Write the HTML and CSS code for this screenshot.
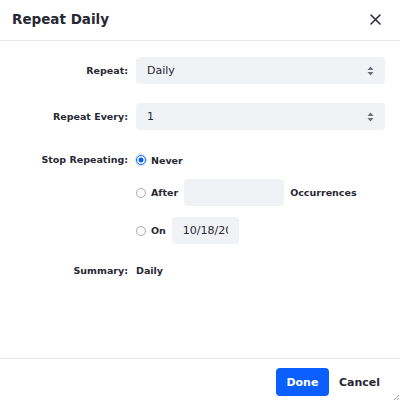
FILE: index.html
```html
<!DOCTYPE html>
<html lang="en">
<head>
<meta charset="utf-8">
<title>Repeat Daily</title>
<link rel="stylesheet" href="styles.css">
</head>
<body>
<div class="dialog">
  <header class="head">
    <h1 class="title">Repeat Daily</h1>
    <button class="close" aria-label="Close">
      <svg width="11" height="11" viewBox="0 0 11 11"><path d="M1 1 L10 10 M10 1 L1 10" stroke="#272833" stroke-width="1.5" stroke-linecap="round" fill="none"/></svg>
    </button>
  </header>
  <main class="body">
    <div class="row">
      <span class="lbl">Repeat:</span>
      <div class="select"><span>Daily</span>
        <svg class="arrows" width="7" height="10" viewBox="0 0 7 10"><path d="M3.5 0.5 L6.5 4 L0.5 4 Z M0.5 6 L6.5 6 L3.5 9.5 Z" fill="#6b6c7e"/></svg>
      </div>
    </div>
    <div class="row r2">
      <span class="lbl">Repeat Every:</span>
      <div class="select"><span>1</span>
        <svg class="arrows" width="7" height="10" viewBox="0 0 7 10"><path d="M3.5 0.5 L6.5 4 L0.5 4 Z M0.5 6 L6.5 6 L3.5 9.5 Z" fill="#6b6c7e"/></svg>
      </div>
    </div>
    <div class="row stop">
      <span class="lbl">Stop Repeating:</span>
      <div class="options">
        <label class="opt never"><input class="radio" type="radio" name="stop" checked><span>Never</span></label>
        <div class="opt after"><input class="radio" type="radio" name="stop"><span>After</span><input class="field w100" type="text"><span class="occ">Occurrences</span></div>
        <div class="opt on"><input class="radio" type="radio" name="stop"><span>On</span><input class="field w67" type="text" value="10/18/2023"></div>
      </div>
    </div>
    <div class="row summary">
      <span class="lbl">Summary:</span>
      <span class="sumval">Daily</span>
    </div>
  </main>
  <footer class="foot">
    <button class="btn primary">Done</button>
    <button class="btn link">Cancel</button>
  </footer>
  <svg class="grip" width="6" height="6" viewBox="0 0 6 6"><path d="M6 1 L1 6 M6 4 L4 6" stroke="#a0a0a8" stroke-width="1" fill="none"/></svg>
</div>
</body>
</html>
```
FILE: styles.css
```css
html, body {
  margin: 0;
  padding: 0;
  background: #fff;
}
body {
  font-family: "DejaVu Sans", sans-serif;
  color: #272833;
}
.dialog {
  position: relative;
  height: 401px;
  display: flex;
  flex-direction: column;
  box-sizing: border-box;
}
.head {
  height: 40px;
  border-bottom: 1px solid #e7e7ed;
  display: flex;
  align-items: center;
  justify-content: space-between;
  padding: 0 15px 0 12px;
  flex: none;
}
.title {
  margin: 0;
  font-size: 13.5px;
  font-weight: bold;
  line-height: 1;
}
.close {
  width: 19px;
  height: 19px;
  padding: 0;
  border: 0;
  background: transparent;
  display: flex;
  align-items: center;
  justify-content: center;
  margin-bottom: 1px;
}
.body {
  padding: 16px 15px 0 0;
}
.row {
  display: flex;
  align-items: center;
}
.lbl {
  flex: none;
  width: 128px;
  margin-right: 8px;
  text-align: right;
  font-weight: bold;
  font-size: 9.5px;
}
.select {
  flex: 1;
  height: 27px;
  background: #f1f2f5;
  border-radius: 4px;
  display: flex;
  align-items: center;
  justify-content: space-between;
  padding: 0 11px 0 11px;
  font-size: 11px;
}
.r2 {
  margin-top: 19px;
}
.stop {
  margin-top: 20px;
  align-items: flex-start;
}
.stop .lbl {
  line-height: 20px;
}
.options {
  display: flex;
  flex-direction: column;
}
.opt {
  display: flex;
  align-items: center;
  font-weight: bold;
  font-size: 9.5px;
}
.never {
  height: 20px;
}
.after {
  margin-top: 9px;
}
.on {
  margin-top: 11px;
}
.radio {
  appearance: none;
  -webkit-appearance: none;
  box-sizing: border-box;
  width: 10px;
  height: 10px;
  margin: 0 5px 0 0;
  border: 1px solid #a7a9bc;
  border-radius: 50%;
  background: #fff;
  flex: none;
}
.radio:checked {
  border: 1.5px solid #0b5fff;
  background: radial-gradient(circle, #0b5fff 0 2.2px, #fff 2.8px);
  box-shadow: 0 0 0 1px #cfdfff;
}
.field {
  box-sizing: border-box;
  height: 27px;
  border: 0;
  border-radius: 4px;
  background: #f1f2f5;
  padding: 0 11px;
  margin-left: 6px;
  font-family: "DejaVu Sans", sans-serif;
  font-size: 11px;
  color: #272833;
  outline: none;
}
.w100 {
  width: 100px;
}
.w67 {
  width: 67px;
}
.occ {
  margin-left: 6px;
}
.summary {
  margin-top: 16px;
  height: 20px;
}
.sumval {
  font-weight: bold;
  font-size: 9.5px;
}
.foot {
  margin-top: auto;
  border-top: 1px solid #e7e7ed;
  display: flex;
  justify-content: flex-end;
  align-items: flex-start;
  padding: 9px 10px 0 0;
  box-sizing: border-box;
  height: 43px;
}
.btn {
  height: 28px;
  border: 0;
  border-radius: 4px;
  font-family: "DejaVu Sans", sans-serif;
  font-weight: bold;
  font-size: 11px;
  padding: 0 10px;
  cursor: pointer;
}
.primary {
  background: #0b5fff;
  color: #fff;
  width: 53px;
  padding: 0;
}
.link {
  background: transparent;
  color: #272833;
}
.grip {
  position: absolute;
  right: 1px;
  bottom: 1px;
}
```
